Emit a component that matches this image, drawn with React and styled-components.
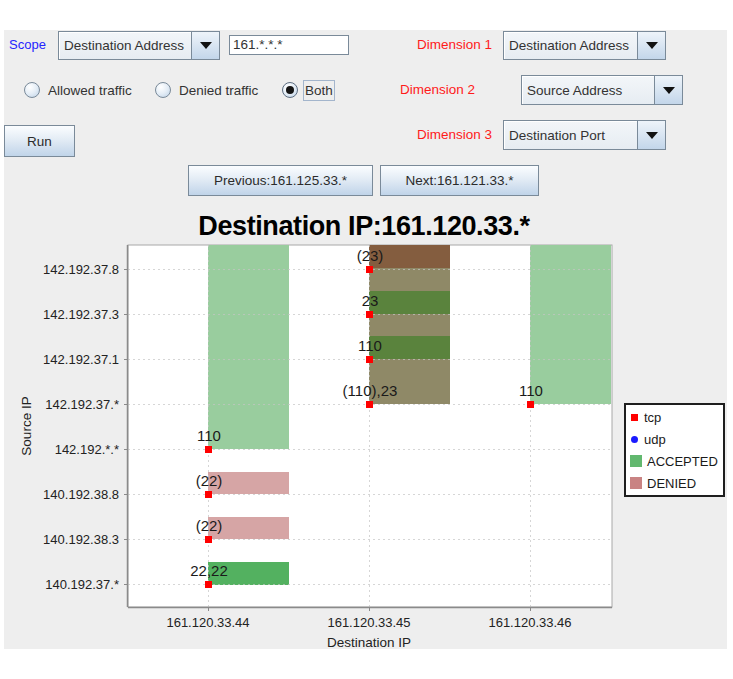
import styled, { createGlobalStyle } from 'styled-components'

const GlobalStyle = createGlobalStyle`
  html, body { margin: 0; padding: 0; background: #ffffff; }
  body { font-family: "Liberation Sans", Arial, sans-serif; color: #2b2b2b; }
`

const Panel = styled.div`
  margin: 30px 0 0 4px;
  width: 723px;
  height: 619px;
  background: #eeeeee;
  display: flex;
  flex-direction: column;
  overflow: hidden;
`

const FormRow = styled.div`
  display: flex;
  align-items: ${({ $align }) => $align || 'center'};
  height: ${({ $height }) => $height}px;
  margin-top: ${({ $top }) => $top || 0}px;
  flex-shrink: 0;
`

const LeftGroup = styled.div`
  display: flex;
  align-items: ${({ $align }) => $align || 'center'};
  width: ${({ $width }) => $width}px;
  padding-left: ${({ $pl }) => $pl || 0}px;
  box-sizing: border-box;
  flex-shrink: 0;
`

const FieldLabel = styled.div`
  width: ${({ $width }) => $width}px;
  margin-left: ${({ $ml }) => $ml || 0}px;
  color: ${({ $color }) => $color};
  font-size: ${({ $size }) => $size || 13.5}px;
  line-height: 30px;
  flex-shrink: 0;
  white-space: nowrap;
`

const Combo = styled.div`
  display: flex;
  width: ${({ $width }) => $width}px;
  height: ${({ $height }) => $height}px;
  box-sizing: border-box;
  border: 1px solid #7a8a99;
  background: linear-gradient(#f3f6f9, #e6ecf2);
  box-shadow: inset 1px 1px 0 #ffffff;
  flex-shrink: 0;
`

const ComboText = styled.div`
  flex: 1;
  padding-left: 5px;
  display: flex;
  align-items: center;
  font-size: 13.5px;
  color: #333;
  white-space: nowrap;
  overflow: hidden;
`

const ComboArrow = styled.div`
  width: 27px;
  border-left: 1px solid #7a8a99;
  background: linear-gradient(#eef4fa, #c3d6ea);
  display: flex;
  align-items: center;
  justify-content: center;
`

const Triangle = styled.div`
  width: 0;
  height: 0;
  border-left: 6px solid transparent;
  border-right: 6px solid transparent;
  border-top: 7px solid #111;
`

const TextField = styled.div`
  width: 120px;
  height: 20px;
  margin-left: 9px;
  box-sizing: border-box;
  border: 1px solid #7a8a99;
  background: #ffffff;
  font-size: 13.5px;
  color: #333;
  padding-left: 3px;
  line-height: 18px;
  flex-shrink: 0;
`

const RadioItem = styled.div`
  display: flex;
  align-items: center;
  width: ${({ $width }) => $width}px;
  flex-shrink: 0;
`

const RadioCircle = styled.div`
  width: 16px;
  height: 16px;
  box-sizing: border-box;
  border-radius: 50%;
  border: 1px solid ${({ $checked }) => ($checked ? '#5d6d80' : '#7a8a99')};
  background: radial-gradient(circle at 35% 30%, #ffffff 0%, #e4edf6 50%, #bdd1e6 100%);
  display: flex;
  align-items: center;
  justify-content: center;
  flex-shrink: 0;

  &::after {
    content: '';
    display: ${({ $checked }) => ($checked ? 'block' : 'none')};
    width: 8px;
    height: 8px;
    border-radius: 50%;
    background: #141414;
  }
`

const RadioText = styled.span`
  margin-left: ${({ $focused }) => ($focused ? 5 : 8)}px;
  font-size: 13.5px;
  color: #333;
  white-space: nowrap;
  padding: ${({ $focused }) => ($focused ? '1px 1px' : '0')};
  border: ${({ $focused }) => ($focused ? '1px solid #a3b5cc' : 'none')};
  line-height: 17px;
`

const Button = styled.div`
  width: ${({ $width }) => $width}px;
  height: ${({ $height }) => $height}px;
  margin-top: ${({ $top }) => $top || 0}px;
  box-sizing: border-box;
  border: 1px solid #7a8a99;
  background: linear-gradient(#fbfdff 0%, #e3ecf5 45%, #c0d4e9 100%);
  display: flex;
  align-items: center;
  justify-content: center;
  font-size: 13.5px;
  color: #2b2b2b;
  flex-shrink: 0;
`

const NavRow = styled.div`
  display: flex;
  justify-content: center;
  gap: 7px;
  margin-top: 8px;
  padding-right: 4px;
  height: 31px;
  flex-shrink: 0;
`

const Title = styled.div`
  margin-top: 16px;
  height: 29px;
  line-height: 29px;
  text-align: center;
  font-size: 27px;
  font-weight: 700;
  letter-spacing: -0.4px;
  color: #000;
  padding-right: 3px;
  flex-shrink: 0;
`

const ChartRow = styled.div`
  display: flex;
  align-items: flex-start;
  height: 408px;
  flex-shrink: 0;
`

const ChartSvg = styled.svg`
  display: block;
  flex-shrink: 0;
  font-family: "Liberation Sans", Arial, sans-serif;
`

const Legend = styled.div`
  margin: 162px 0 0 4px;
  width: 101px;
  height: 94px;
  box-sizing: border-box;
  border: 2px solid #1e1e1e;
  background: #ffffff;
  padding: 1px 0 0 4px;
  display: flex;
  flex-direction: column;
`

const LegendItem = styled.div`
  display: flex;
  align-items: center;
  height: 22px;
  gap: ${({ $gap }) => $gap}px;
  font-size: 13px;
  color: #1a1a1a;
`

const Swatch = styled.span`
  display: inline-block;
  width: ${({ $size }) => $size}px;
  height: ${({ $size }) => $size}px;
  border-radius: ${({ $round }) => ($round ? '50%' : '0')};
  background: ${({ $color }) => $color};
  margin-left: ${({ $ml }) => $ml || 0}px;
`

const LIGHT_GREEN = '#99cd9e'
const PINK = '#d6a5a5'
const GREEN = '#53b160'
const BROWN = '#845d3f'
const OLIVE = '#8f8967'
const DARK_GREEN = '#5a833d'

const COLS = [208, 369, 530]
const ROWS = [269, 314, 359, 404, 449, 494, 539, 584]
const BAR_W = 81
const PLOT = { left: 128, top: 245, right: 612, bottom: 607 }

const rowLabels = [
  '142.192.37.8',
  '142.192.37.3',
  '142.192.37.1',
  '142.192.37.*',
  '142.192.*.*',
  '140.192.38.8',
  '140.192.38.3',
  '140.192.37.*',
]
const colLabels = ['161.120.33.44', '161.120.33.45', '161.120.33.46']

const bars = [
  { c: 0, y1: 245, y2: 449, fill: LIGHT_GREEN },
  { c: 0, y1: 472, y2: 494, fill: PINK },
  { c: 0, y1: 517, y2: 539, fill: PINK },
  { c: 0, y1: 562, y2: 585, fill: GREEN },
  { c: 1, y1: 245, y2: 268, fill: BROWN },
  { c: 1, y1: 268, y2: 291, fill: OLIVE },
  { c: 1, y1: 291, y2: 314, fill: DARK_GREEN },
  { c: 1, y1: 314, y2: 336, fill: OLIVE },
  { c: 1, y1: 336, y2: 359, fill: DARK_GREEN },
  { c: 1, y1: 359, y2: 404, fill: OLIVE },
  { c: 2, y1: 245, y2: 404, fill: LIGHT_GREEN },
]

const points = [
  [0, 4, '110'],
  [0, 5, '(22)'],
  [0, 6, '(22)'],
  [0, 7, '22,22'],
  [1, 0, '(23)'],
  [1, 1, '23'],
  [1, 2, '110'],
  [1, 3, '(110),23'],
  [2, 3, '110'],
]

function Chart() {
  return (
    <ChartSvg width="616" height="408" viewBox="0 0 616 408">
      <g transform="translate(-4,-241)">
        <rect
          x={PLOT.left}
          y={PLOT.top}
          width={PLOT.right - PLOT.left}
          height={PLOT.bottom - PLOT.top}
          fill="#ffffff"
          stroke="#a8a8a8"
        />
        {bars.map((b, i) => (
          <rect key={i} x={COLS[b.c]} y={b.y1} width={BAR_W} height={b.y2 - b.y1} fill={b.fill} />
        ))}
        {COLS.map((x) => (
          <line key={x} x1={x + 0.5} x2={x + 0.5} y1={PLOT.top} y2={PLOT.bottom} stroke="#c4c4c4" strokeOpacity="0.7" strokeDasharray="2 3" />
        ))}
        {ROWS.map((y) => (
          <line key={y} x1={PLOT.left} x2={PLOT.right} y1={y + 0.5} y2={y + 0.5} stroke="#c4c4c4" strokeOpacity="0.7" strokeDasharray="2 3" />
        ))}
        <line x1={PLOT.left - 0.5} x2={PLOT.left - 0.5} y1={PLOT.top} y2={PLOT.bottom} stroke="#8a8a8a" strokeWidth="1.5" />
        <line x1={PLOT.left} x2={PLOT.right} y1={PLOT.bottom + 0.5} y2={PLOT.bottom + 0.5} stroke="#8a8a8a" strokeWidth="1.5" />
        {ROWS.map((y, i) => (
          <g key={y}>
            <line x1={PLOT.left - 4} x2={PLOT.left - 1} y1={y + 0.5} y2={y + 0.5} stroke="#8a8a8a" />
            <text x="119" y={y + 5} fontSize="13" textAnchor="end" fill="#222">{rowLabels[i]}</text>
          </g>
        ))}
        {COLS.map((x, i) => (
          <g key={x}>
            <line x1={x + 0.5} x2={x + 0.5} y1={PLOT.bottom + 1} y2={PLOT.bottom + 4} stroke="#8a8a8a" />
            <text x={x} y="627" fontSize="13" textAnchor="middle" fill="#222">{colLabels[i]}</text>
          </g>
        ))}
        <text x="369" y="647" fontSize="13.5" textAnchor="middle" fill="#222">Destination IP</text>
        <text x="31" y="426" fontSize="13.5" textAnchor="middle" fill="#222" transform="rotate(-90 31 426)">Source IP</text>
        {points.map(([c, r, label]) => (
          <g key={`${c}-${r}`}>
            <rect x={COLS[c] - 3} y={ROWS[r] - 3} width="7" height="7" fill="#ff0000" />
            <text x={COLS[c] + 1} y={ROWS[r] - 8} fontSize="15" textAnchor="middle" fill="#1a1a1a">{label}</text>
          </g>
        ))}
      </g>
    </ChartSvg>
  )
}

function Select({ width, height, value }) {
  return (
    <Combo $width={width} $height={height}>
      <ComboText>{value}</ComboText>
      <ComboArrow><Triangle /></ComboArrow>
    </Combo>
  )
}

export default function App() {
  return (
    <>
      <GlobalStyle />
      <Panel>
        <FormRow $height={30}>
          <LeftGroup $width={413} $pl={5}>
            <FieldLabel $width={49} $color="#2424ff" $size={13}>Scope</FieldLabel>
            <Select width={162} height={29} value="Destination Address" />
            <TextField>161.*.*.*</TextField>
          </LeftGroup>
          <FieldLabel $width={86} $color="#ff1a1a">Dimension 1</FieldLabel>
          <Select width={163} height={29} value="Destination Address" />
        </FormRow>

        <FormRow $height={30} $top={15}>
          <LeftGroup $width={396} $pl={20}>
            <RadioItem $width={131}>
              <RadioCircle />
              <RadioText>Allowed traffic</RadioText>
            </RadioItem>
            <RadioItem $width={127}>
              <RadioCircle />
              <RadioText>Denied traffic</RadioText>
            </RadioItem>
            <RadioItem $width={60}>
              <RadioCircle $checked />
              <RadioText $focused>Both</RadioText>
            </RadioItem>
          </LeftGroup>
          <FieldLabel $width={121} $color="#ff1a1a">Dimension 2</FieldLabel>
          <Select width={162} height={30} value="Source Address" />
        </FormRow>

        <FormRow $height={37} $top={15} $align="flex-start">
          <LeftGroup $width={413} $align="flex-start">
            <Button $width={71} $height={32} $top={5}>Run</Button>
          </LeftGroup>
          <FieldLabel $width={86} $color="#ff1a1a">Dimension 3</FieldLabel>
          <Select width={163} height={30} value="Destination Port" />
        </FormRow>

        <NavRow>
          <Button $width={185} $height={31}>Previous:161.125.33.*</Button>
          <Button $width={159} $height={31}>Next:161.121.33.*</Button>
        </NavRow>

        <Title>Destination IP:161.120.33.*</Title>

        <ChartRow>
          <Chart />
          <Legend>
            <LegendItem $gap={6}>
              <Swatch $size={7} $color="#ff0000" $ml={1} />
              tcp
            </LegendItem>
            <LegendItem $gap={6}>
              <Swatch $size={7} $round $color="#1a1aff" $ml={1} />
              udp
            </LegendItem>
            <LegendItem $gap={5}>
              <Swatch $size={12} $color="#62b86f" />
              ACCEPTED
            </LegendItem>
            <LegendItem $gap={5}>
              <Swatch $size={12} $color="#c98383" />
              DENIED
            </LegendItem>
          </Legend>
        </ChartRow>
      </Panel>
    </>
  )
}
